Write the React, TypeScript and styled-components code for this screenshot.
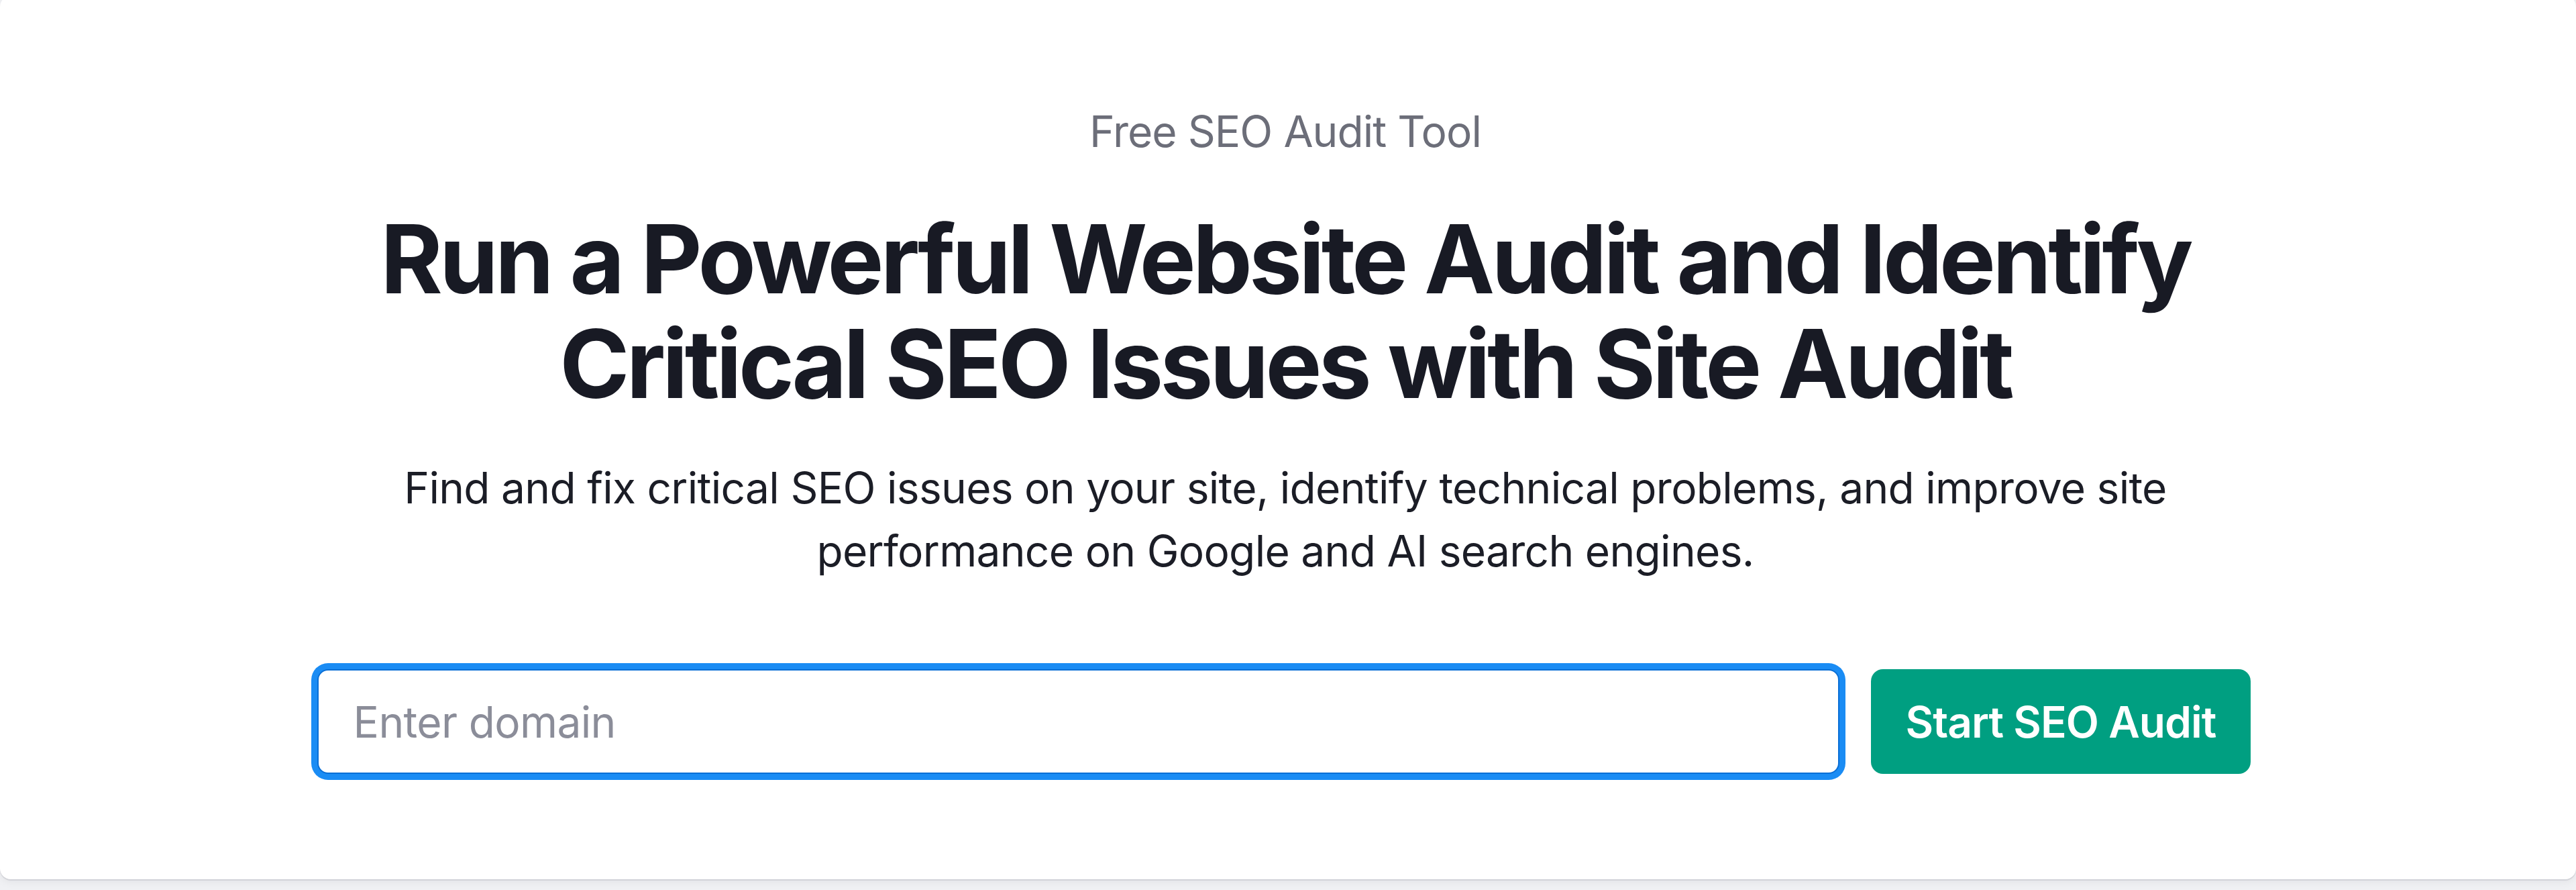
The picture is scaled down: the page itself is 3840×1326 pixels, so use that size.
import React from "react";
import styled, { createGlobalStyle } from "styled-components";

const GlobalStyle = createGlobalStyle`
  html, body {
    margin: 0;
    padding: 0;
    background: #f0f1f4;
    font-family: Inter, "Noto Sans", "Liberation Sans", sans-serif;
    -webkit-font-smoothing: antialiased;
  }
  * { box-sizing: border-box; }
`;

const Page = styled.div`
  width: 3840px;
  height: 1326px;
  overflow: hidden;
  background: #f0f1f4;
`;

const Card = styled.section`
  margin-top: -6px;
  width: 3840px;
  background: #ffffff;
  border-radius: 16px;
  box-shadow: 0 2px 1px rgba(20, 24, 40, 0.1), 0 4px 14px rgba(20, 24, 40, 0.06);
  padding: 154px 8px 157px 0;
  display: flex;
  flex-direction: column;
  align-items: center;
  text-align: center;
`;

const Eyebrow = styled.p`
  margin: 0;
  font-size: 64px;
  line-height: 96px;
  font-weight: 400;
  letter-spacing: -0.015em;
  color: #6c6e79;
`;

const Title = styled.h1`
  margin: 64px 0 0;
  font-size: 141px;
  line-height: 156px;
  font-weight: 700;
  letter-spacing: -0.034em;
  color: #181a24;
`;

const Lead = styled.p`
  margin: 60px 0 0;
  font-size: 64px;
  line-height: 94px;
  font-weight: 400;
  letter-spacing: -0.011em;
  color: #1b1d26;
`;

const Form = styled.form`
  margin-top: 129px;
  display: flex;
  align-items: center;
  gap: 47px;
  margin-right: 4px;
`;

const DomainInput = styled.input`
  width: 2269px;
  height: 156px;
  padding: 0 52px;
  border: 2px solid #0a6fd6;
  border-radius: 16px;
  box-shadow: 0 0 0 9px #1a8cf4;
  outline: none;
  font-family: inherit;
  font-size: 64px;
  letter-spacing: -0.01em;
  color: #181a24;
  caret-color: #111;
  background: #fff;

  &::placeholder {
    color: #8b8d99;
  }
`;

const SubmitButton = styled.button`
  height: 156px;
  padding: 0 52px;
  border: none;
  border-radius: 18px;
  background: #009f81;
  color: #ffffff;
  font-family: inherit;
  font-size: 64px;
  font-weight: 600;
  letter-spacing: -0.015em;
  cursor: pointer;
  white-space: nowrap;
`;

export default function App() {
  return (
    <Page>
      <GlobalStyle />
      <Card>
        <Eyebrow>Free SEO Audit Tool</Eyebrow>
        <Title>
          Run a Powerful Website Audit and Identify
          <br />
          Critical SEO Issues with Site Audit
        </Title>
        <Lead>
          Find and fix critical SEO issues on your site, identify technical problems, and improve site
          <br />
          performance on Google and AI search engines.
        </Lead>
        <Form onSubmit={(e) => e.preventDefault()}>
          <DomainInput type="text" placeholder="Enter domain" autoFocus />
          <SubmitButton type="submit">Start SEO Audit</SubmitButton>
        </Form>
      </Card>
    </Page>
  );
}
